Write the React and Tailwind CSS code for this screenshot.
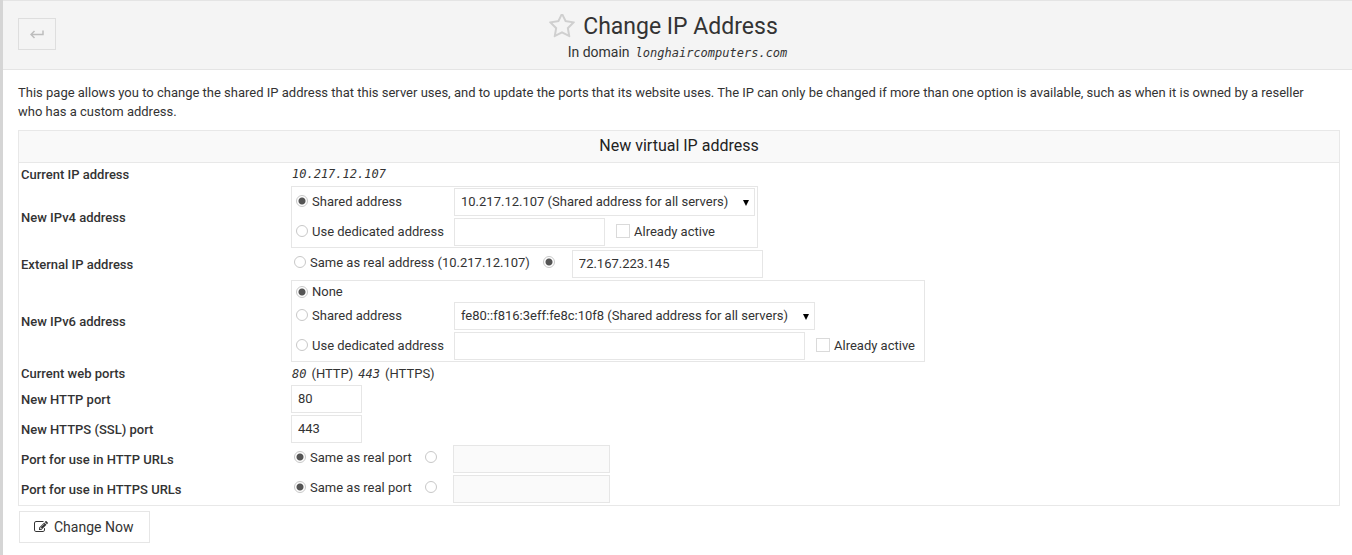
import React, { useState } from "react";

const inputClass =
    "h-7 border border-[#e6e6e6] bg-white px-1.5 pb-0.5 text-[13px] text-[#333] outline-none disabled:bg-[#fafafa]";

function Radio({ label, ...props }) {
    return (
        <label className="flex items-center gap-1 pb-0.5">
            <input
                type="radio"
                className="size-3 shrink-0 appearance-none rounded-full border border-[#c8c8c8] bg-white checked:bg-[radial-gradient(circle,#555_0_3px,transparent_4px)]"
                {...props}
            />
            {label}
        </label>
    );
}

function Checkbox({ label }) {
    return (
        <label className="flex items-center gap-1 pb-0.5">
            <input
                type="checkbox"
                className="size-3.5 appearance-none border border-[#dadada] bg-white checked:bg-[#555]"
            />
            {label}
        </label>
    );
}

function AddressSelect({ label, option }) {
    return (
        <div className="relative w-fit">
            <select
                aria-label={label}
                className="block h-7 appearance-none border border-[#e6e6e6] bg-white pb-0.5 pl-1.5 pr-[25px] text-[13px] text-[#333] outline-none"
            >
                <option>{option}</option>
            </select>
            <svg viewBox="0 0 6 6" className="pointer-events-none absolute right-1.5 top-3 size-1.5 fill-black">
                <path d="M0 0h6L3 6z" />
            </svg>
        </div>
    );
}

function Row({ label, htmlFor, children }) {
    return (
        <div className="grid grid-cols-[270px_1fr] items-center">
            {htmlFor ? (
                <label htmlFor={htmlFor} className="font-medium">{label}</label>
            ) : (
                <span className="font-medium">{label}</span>
            )}
            <div>{children}</div>
        </div>
    );
}

function Mono({ children }) {
    return <em className="font-['DejaVu_Sans_Mono',monospace] text-[12px]">{children}</em>;
}

function UrlPort({ name, label }) {
    const [custom, setCustom] = useState(false);

    return (
        <Row label={label}>
            <div className="flex items-center">
                <div className="flex gap-[13px] pb-0.5 pl-[3px] pr-4">
                    <Radio name={name} label="Same as real port" checked={!custom} onChange={() => setCustom(false)} />
                    <Radio name={name} aria-label="Other port" checked={custom} onChange={() => setCustom(true)} />
                </div>
                <input type="text" aria-label={label} disabled={!custom} className={`${inputClass} w-[157px]`} />
            </div>
        </Row>
    );
}

export default function App() {
    const [ipv4, setIpv4] = useState("shared");
    const [external, setExternal] = useState("custom");
    const [ipv6, setIpv6] = useState("none");

    return (
        <div className="min-h-screen border-l-3 border-[#d5d5d5] bg-white font-['Roboto',sans-serif] text-[13px] leading-[19px] text-[#333]">

            {/* Header */}
            <header className="grid grid-cols-[1fr_auto_1fr] items-start border-y border-[#e4e4e4] bg-[#f4f4f4] px-[15px] pb-2">
                <button
                    aria-label="Go back"
                    className="mt-[17px] flex h-8 w-[38px] items-center justify-center border border-[#dedede]"
                >
                    <svg viewBox="0 0 14 9" className="h-[9px] w-3.5 fill-none stroke-[#bdbdbd] stroke-[1.5]">
                        <path d="M13 0.5V4.5H1.5M4.5 1L1 4.5L4.5 8" />
                    </svg>
                </button>
                <div>
                    <div className="flex items-center justify-center gap-2 pr-7 pt-2.5">
                        <svg viewBox="64 128 1664 1664" className="size-[26px] fill-[#cfcfcf]">
                            <path d="M1201 1004l306-297-422-62-189-382-189 382-422 62 306 297-73 421 378-199 377 199zm527-357q0 22-26 48l-363 354 86 500q1 7 1 20 0 50-41 50-19 0-40-12l-449-236-449 236q-22 12-40 12-21 0-31.5-14.5t-10.5-35.5q0-6 2-20l86-500-364-354q-25-27-25-48 0-37 56-46l502-73 225-455q19-41 49-41t49 41l225 455 502 73q56 9 56 46z" />
                        </svg>
                        <h1 className="text-[23px] leading-8">Change IP Address</h1>
                    </div>
                    <p className="flex h-[18px] items-baseline justify-center gap-1.5 text-[14px] leading-[18px]">
                        <span>In domain</span>
                        <Mono>longhaircomputers.com</Mono>
                    </p>
                </div>
            </header>

            <main className="px-[15px] pt-[13px] pr-3">
                <p className="pr-4">
                    This page allows you to change the shared IP address that this server uses, and to update the ports that its website uses. The IP can only be changed if more than one option is available, such as when it is owned by a reseller who has a custom address.
                </p>

                <form onSubmit={(e) => e.preventDefault()}>
                    <section className="mt-[9px] border border-[#e8e8e8]">
                        <h2 className="border-b border-[#e8e8e8] bg-[#f9f9f9] pb-1.5 pt-[5px] text-center text-[16px] leading-5 text-[#222]">
                            New virtual IP address
                        </h2>

                        <div className="flex flex-col gap-0.5 pb-0.5 pl-0.5 pt-0.5">
                            <Row label="Current IP address">
                                <div className="flex items-baseline pl-px"><Mono>10.217.12.107</Mono></div>
                            </Row>

                            {/* IPv4 */}
                            <Row label="New IPv4 address">
                                <div className="grid w-fit grid-cols-[158px_auto] items-center gap-y-0.5 border border-[#e6e6e6] py-px pl-1 pr-0.5">
                                    <Radio name="ipv4" label="Shared address" checked={ipv4 === "shared"} onChange={() => setIpv4("shared")} />
                                    <AddressSelect label="Shared IPv4 address" option="10.217.12.107 (Shared address for all servers)" />
                                    <Radio name="ipv4" label="Use dedicated address" checked={ipv4 === "dedicated"} onChange={() => setIpv4("dedicated")} />
                                    <div className="flex items-center gap-[11px]">
                                        <input type="text" aria-label="Dedicated IPv4 address" className={`${inputClass} w-[151px]`} />
                                        <Checkbox label="Already active" />
                                    </div>
                                </div>
                            </Row>

                            {/* External */}
                            <Row label="External IP address">
                                <div className="flex items-center">
                                    <div className="flex gap-[13px] pb-0.5 pl-[3px] pr-[17px]">
                                        <Radio name="external" label="Same as real address (10.217.12.107)" checked={external === "same"} onChange={() => setExternal("same")} />
                                        <Radio name="external" aria-label="Other external address" checked={external === "custom"} onChange={() => setExternal("custom")} />
                                    </div>
                                    <input type="text" aria-label="External IP address" defaultValue="72.167.223.145" className={`${inputClass} w-[191px]`} />
                                </div>
                            </Row>

                            {/* IPv6 */}
                            <Row label="New IPv6 address">
                                <div className="grid w-fit grid-cols-[158px_auto] items-center gap-y-0.5 border border-[#e6e6e6] py-px pl-1 pr-[9px]">
                                    <div className="col-span-2 h-[18px]">
                                        <Radio name="ipv6" label="None" checked={ipv6 === "none"} onChange={() => setIpv6("none")} />
                                    </div>
                                    <Radio name="ipv6" label="Shared address" checked={ipv6 === "shared"} onChange={() => setIpv6("shared")} />
                                    <AddressSelect label="Shared IPv6 address" option="fe80::f816:3eff:fe8c:10f8 (Shared address for all servers)" />
                                    <Radio name="ipv6" label="Use dedicated address" checked={ipv6 === "dedicated"} onChange={() => setIpv6("dedicated")} />
                                    <div className="flex items-center gap-[11px]">
                                        <input type="text" aria-label="Dedicated IPv6 address" className={`${inputClass} w-[351px]`} />
                                        <Checkbox label="Already active" />
                                    </div>
                                </div>
                            </Row>

                            {/* Ports */}
                            <Row label="Current web ports">
                                <div className="flex h-[19px] items-baseline gap-[5px] pl-px">
                                    <Mono>80</Mono>
                                    <span>(HTTP)</span>
                                    <Mono>443</Mono>
                                    <span>(HTTPS)</span>
                                </div>
                            </Row>
                            <Row label="New HTTP port" htmlFor="http-port">
                                <input id="http-port" type="text" defaultValue="80" className={`${inputClass} block w-[71px]`} />
                            </Row>
                            <Row label="New HTTPS (SSL) port" htmlFor="https-port">
                                <input id="https-port" type="text" defaultValue="443" className={`${inputClass} block w-[71px]`} />
                            </Row>
                            <UrlPort name="http-url" label="Port for use in HTTP URLs" />
                            <UrlPort name="https-url" label="Port for use in HTTPS URLs" />
                        </div>
                    </section>

                    <button
                        type="submit"
                        className="ml-px mt-[5px] flex h-8 w-fit items-center gap-1.5 border border-[#e6e6e6] pl-3.5 pr-4 text-[14px]"
                    >
                        <svg viewBox="0 0 1792 1792" className="size-3.5 fill-[#333]">
                            <path d="M888 1184l116-116-152-152-116 116v56h96v96h56zm440-720q-16-16-33 1l-350 350q-17 17-1 33t33-1l350-350q17-17 1-33zm80 594v190q0 119-84.5 203.5t-203.5 84.5h-832q-119 0-203.5-84.5t-84.5-203.5v-832q0-119 84.5-203.5t203.5-84.5h832q63 0 117 25 15 7 18 23 3 17-9 29l-49 49q-14 14-32 8-23-6-45-6h-832q-66 0-113 47t-47 113v832q0 66 47 113t113 47h832q66 0 113-47t47-113v-126q0-13 9-22l64-64q15-15 35-7t20 29zm-96-738l288 288-672 672h-288v-288zm444 132l-92 92-288-288 92-92q28-28 68-28t68 28l152 152q28 28 28 68t-28 68z" />
                        </svg>
                        Change Now
                    </button>
                </form>
            </main>
        </div>
    );
}
